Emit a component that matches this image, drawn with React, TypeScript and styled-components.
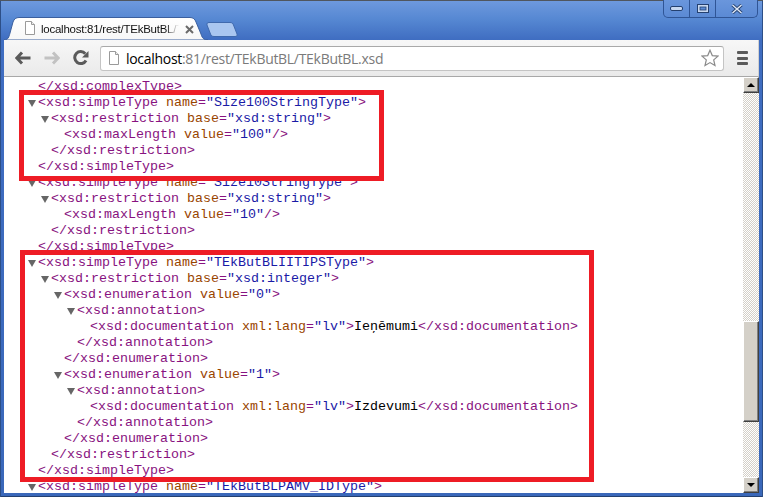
import React from "react";
import styled, { createGlobalStyle } from "styled-components";

const Global = createGlobalStyle`
  html, body { margin: 0; padding: 0; background: #fff; }
  #root { width: 764px; height: 498px; overflow: hidden; }
`;

const Window = styled.div`
  width: 763px; height: 497px; box-sizing: border-box; position: relative; overflow: hidden;
  display: flex; flex-direction: column;
  padding: 0 4px 4px 4px;
  background: linear-gradient(#6f9ade 0, #5587d2 20px, #3f6dc1 40px, #3a68ba 100%);
  box-shadow: inset 0 1px 0 #50565e, inset 1px 0 0 #2d4f87, inset -1px 0 0 #2d4f87, inset 0 -1px 0 #24406f;
`;

const TitleBar = styled.div`
  height: 17px; display: flex; justify-content: flex-end; flex: none;
`;

const Controls = styled.div`
  display: flex; height: 17px; margin-right: 1px;
  border: 1px solid #2f5596; border-top: 0; border-radius: 0 0 5px 5px;
  background: linear-gradient(#6a96dc, #5b8ad4);
`;

const ControlButton = styled.div<{ $w: number }>`
  width: ${p => p.$w}px; display: flex; align-items: center; justify-content: center;
  & + & { border-left: 1px solid #2f5596; }
`;

const TabStrip = styled.div`
  height: 23px; flex: none; display: flex; align-items: flex-end;
`;

const Tab = styled.div`
  width: 204px; height: 23px; position: relative; display: flex; align-items: center;
  padding: 1px 12px 0 37px; box-sizing: border-box; gap: 6px;
`;

const TabShape = styled.svg`
  position: absolute; left: 0; top: 0;
`;

const TabIcon = styled.svg`
  position: absolute; left: 20px; top: 4px;
`;

const TabTitle = styled.span`
  position: relative; flex: 1; overflow: hidden; white-space: nowrap;
  font: 11.5px "Liberation Sans", sans-serif; letter-spacing: -0.25px; color: #111;
  mask-image: linear-gradient(to right, #000 90%, transparent 100%);
`;

const TabClose = styled.svg`
  position: relative; flex: none; margin-right: 2px;
`;

const NewTab = styled.svg`
  margin: 0 0 3px -4px; flex: none;
`;

const Toolbar = styled.div`
  height: 37px; flex: none; display: flex; align-items: center; box-sizing: border-box;
  padding: 0 10px 0 11px; background: linear-gradient(#f7f7f7, #eaeaea);
  border-bottom: 1px solid #a8a8a8; border-right: 1px solid #d0d0d0;
`;

const NavIcon = styled.svg<{ $mr: number }>`
  flex: none; margin-right: ${p => p.$mr}px;
`;

const Omnibox = styled.div`
  flex: none; width: 624px; height: 25px; box-sizing: border-box;
  display: flex; align-items: center; padding: 0 4px 0 7px;
  background: #fff; border: 1px solid #c4c4c4; border-top-color: #a9a9a9; border-radius: 3px;
`;

const UrlText = styled.span`
  margin-left: 6px; flex: 1;
  font: 14px "Open Sans", "Liberation Sans", sans-serif; letter-spacing: -0.3px; color: #7a7a7a;
  white-space: nowrap;
  b { font-weight: 400; color: #000; }
`;

const MenuButton = styled.div`
  margin-left: 13px; width: 13px; display: flex; flex-direction: column; gap: 2.500px;
  span { height: 3px; border-radius: 1px; background: #5a5a5a; }
`;

const Content = styled.div`
  flex: 1; min-height: 0; display: flex; position: relative; background: #fff; overflow: hidden;
`;

const Xml = styled.div`
  flex: 1; min-width: 0; overflow: hidden; padding-top: 2px;
  font: 13.333px/16px "Liberation Mono", "Courier New", monospace; color: #000;
`;

const Row = styled.div<{ $level: number }>`
  height: 16px; position: relative; white-space: pre; padding-left: ${p => 34 + p.$level * 13}px;
`;

const Arrow = styled.span`
  position: absolute; top: 5px; margin-left: -10px;
  width: 0; height: 0; border-left: 4px solid transparent; border-right: 4px solid transparent;
  border-top: 7px solid #666;
`;

const Tag = styled.span` color: #881280; `;
const Attr = styled.span` color: #994500; `;
const Val = styled.span` color: #1a1aa6; `;

const Scrollbar = styled.div`
  width: 16px; flex: none; display: flex; flex-direction: column; box-sizing: border-box;
  background: repeating-conic-gradient(#d4d0c8 0 25%, #fff 0 50%) 0 0 / 2px 2px;
`;

const raised = `
  background: #d4d0c8; box-sizing: border-box;
  border: 1px solid; border-color: #fff #404040 #404040 #fff;
  box-shadow: inset -1px -1px 0 #808080;
`;

const ScrollButton = styled.div`
  ${raised}
  height: 16px; flex: none; display: flex; align-items: center; justify-content: center;
`;

const Spacer = styled.div<{ $h: number }>` height: ${p => p.$h}px; flex: none; `;
const Thumb = styled.div<{ $h: number }>`
  ${raised}
  height: ${p => p.$h}px; flex: none;
`;

const Triangle = styled.span<{ $up?: boolean }>`
  width: 0; height: 0; border-left: 4px solid transparent; border-right: 4px solid transparent;
  ${p => (p.$up ? "border-bottom: 4px solid #000;" : "border-top: 4px solid #000;")}
`;

const Highlight = styled.div<{ $l: number; $t: number; $w: number; $h: number }>`
  position: absolute; box-sizing: border-box; border: 5px solid #ee1c25;
  left: ${p => p.$l}px; top: ${p => p.$t}px; width: ${p => p.$w}px; height: ${p => p.$h}px;
  pointer-events: none;
`;

const Open = ({ n, a, v, end = ">" }: { n: string; a?: string; v?: string; end?: string }) => (
  <>
    <Tag>{`<xsd:${n}`}</Tag>
    {a && <Attr>{` ${a}`}</Attr>}
    {a && <Tag>=</Tag>}
    {a && <Val>{`"${v}"`}</Val>}
    <Tag>{end}</Tag>
  </>
);
const Close = ({ n }: { n: string }) => <Tag>{`</xsd:${n}>`}</Tag>;

type R = { l: number; arrow?: boolean; c: React.ReactNode };
const doc = (t: string) => (
  <>
    <Open n="documentation" a="xml:lang" v="lv" />
    {t}
    <Close n="documentation" />
  </>
);
const rows: R[] = [
  { l: 0, c: <Close n="complexType" /> },
  { l: 0, arrow: true, c: <Open n="simpleType" a="name" v="Size100StringType" /> },
  { l: 1, arrow: true, c: <Open n="restriction" a="base" v="xsd:string" /> },
  { l: 2, c: <Open n="maxLength" a="value" v="100" end="/>" /> },
  { l: 1, c: <Close n="restriction" /> },
  { l: 0, c: <Close n="simpleType" /> },
  { l: 0, arrow: true, c: <Open n="simpleType" a="name" v="Size10StringType" /> },
  { l: 1, arrow: true, c: <Open n="restriction" a="base" v="xsd:string" /> },
  { l: 2, c: <Open n="maxLength" a="value" v="10" end="/>" /> },
  { l: 1, c: <Close n="restriction" /> },
  { l: 0, c: <Close n="simpleType" /> },
  { l: 0, arrow: true, c: <Open n="simpleType" a="name" v="TEkButBLIITIPSType" /> },
  { l: 1, arrow: true, c: <Open n="restriction" a="base" v="xsd:integer" /> },
  { l: 2, arrow: true, c: <Open n="enumeration" a="value" v="0" /> },
  { l: 3, arrow: true, c: <Open n="annotation" /> },
  { l: 4, c: doc("Ieņēmumi") },
  { l: 3, c: <Close n="annotation" /> },
  { l: 2, c: <Close n="enumeration" /> },
  { l: 2, arrow: true, c: <Open n="enumeration" a="value" v="1" /> },
  { l: 3, arrow: true, c: <Open n="annotation" /> },
  { l: 4, c: doc("Izdevumi") },
  { l: 3, c: <Close n="annotation" /> },
  { l: 2, c: <Close n="enumeration" /> },
  { l: 1, c: <Close n="restriction" /> },
  { l: 0, c: <Close n="simpleType" /> },
  { l: 0, arrow: true, c: <Open n="simpleType" a="name" v="TEkButBLPAMV_IDType" /> },
];

const PageGlyph = () => (
  <>
    <path d="M1.500 .5H7.500L10.500 3.500V13.500H1.500Z" fill="#fff" stroke="#9a9a9a" />
    <path d="M7.500 .5V3.500H10.500" fill="#eee" stroke="#9a9a9a" />
  </>
);

export default function App() {
  return (
    <Window>
      <Global />
      <TitleBar>
        <Controls>
          <ControlButton $w={25}>
            <svg width="13" height="6" viewBox="0 0 13 6"><rect x=".5" y=".5" width="12" height="4" rx="1.500" fill="#c8d8f0" stroke="#24406f" /></svg>
          </ControlButton>
          <ControlButton $w={25}>
            <svg width="12" height="10" viewBox="0 0 12 10"><rect x=".5" y=".5" width="11" height="8" fill="#c8d8f0" stroke="#24406f" /><rect x="3" y="3" width="6" height="3" fill="#5b8ad4" stroke="#24406f" strokeWidth=".8" /></svg>
          </ControlButton>
          <ControlButton $w={41}>
            <svg width="12" height="10" viewBox="0 0 12 10"><path d="M1.500 1 10.500 9M10.500 1 1.500 9" stroke="#24406f" strokeWidth="3.200" /><path d="M1.500 1 10.500 9M10.500 1 1.500 9" stroke="#dfe8f6" strokeWidth="1.500" /></svg>
          </ControlButton>
        </Controls>
      </TitleBar>
      <TabStrip>
        <Tab>
          <TabShape width="204" height="23" viewBox="0 0 204 23">
            <defs>
              <linearGradient id="tabFill" x1="0" x2="0" y1="0" y2="1">
                <stop offset="0" stopColor="#fff" />
                <stop offset="1" stopColor="#f7f7f7" />
              </linearGradient>
            </defs>
            <path d="M0 23C4 23 5 20 6 16L9 5C10 2 12 .5 15 .5H186C189 .5 191 2 192 5L197 17C198 21 200 23 204 23Z" fill="url(#tabFill)" stroke="#3a5f9e" />
          </TabShape>
          <TabIcon width="12" height="14" viewBox="0 0 12 14"><PageGlyph /></TabIcon>
          <TabTitle>localhost:81/rest/TEkButBL/TEkButBL.xsd</TabTitle>
          <TabClose width="9" height="9" viewBox="0 0 9 9"><path d="M1 1 8 8M8 1 1 8" stroke="#6a6a6a" strokeWidth="2" /></TabClose>
        </Tab>
        <NewTab width="35" height="15" viewBox="0 0 35 15">
          <path d="M5 .5H26C28 .5 29 1.500 29.500 3L33 12C33.500 13.500 33 14.500 31 14.500H10C8 14.500 7 13.500 6.500 12L3 3C2.500 1.500 3.500 .5 5 .5Z" fill="#a9c6f0" stroke="#3f69ad" />
        </NewTab>
      </TabStrip>
      <Toolbar>
        <NavIcon $mr={13} width="16" height="14" viewBox="0 0 16 14"><path d="M7 1.500 1.800 7 7 12.500M2.500 7H15.500" fill="none" stroke="#5a5a5a" strokeWidth="3" /></NavIcon>
        <NavIcon $mr={13} width="16" height="14" viewBox="0 0 16 14"><path d="M9 1.500 14.200 7 9 12.500M13.500 7H.5" fill="none" stroke="#c2c2c2" strokeWidth="3" /></NavIcon>
        <NavIcon $mr={11} width="16" height="16" viewBox="0 0 16 16"><path d="M13 10.500A6 6 0 1 1 12.300 3.700" fill="none" stroke="#5a5a5a" strokeWidth="3" /><path d="M15.500 1V7.500H9Z" fill="#5a5a5a" /></NavIcon>
        <Omnibox>
          <svg width="12" height="14" viewBox="0 0 12 14"><PageGlyph /></svg>
          <UrlText><b>localhost</b>:81/rest/TEkButBL/TEkButBL.xsd</UrlText>
          <svg width="18" height="18" viewBox="0 0 18 18"><path d="M9 1.200 11.300 6.600 17 7.100 12.700 10.900 14 16.600 9 13.600 4 16.600 5.300 10.900 1 7.100 6.700 6.600Z" fill="#fff" stroke="#8a8a8a" strokeWidth="1.200" /></svg>
        </Omnibox>
        <MenuButton><span /><span /><span /></MenuButton>
      </Toolbar>
      <Content>
        <Xml>
          {rows.map((r, i) => (
            <Row key={i} $level={r.l}>
              {r.arrow && <Arrow />}
              {r.c}
            </Row>
          ))}
        </Xml>
        <Scrollbar>
          <ScrollButton><Triangle $up /></ScrollButton>
          <Spacer $h={228} />
          <Thumb $h={101} />
          <Spacer $h={55} />
          <ScrollButton><Triangle /></ScrollButton>
        </Scrollbar>
        <Highlight $l={15} $t={13} $w={365} $h={91} />
        <Highlight $l={16} $t={173} $w={574} $h={232} />
      </Content>
    </Window>
  );
}
